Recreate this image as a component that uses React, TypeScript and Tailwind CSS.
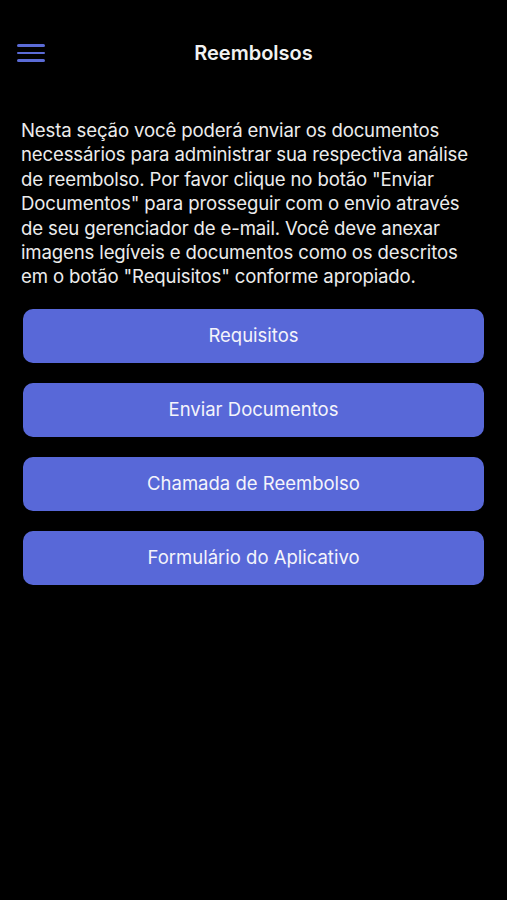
export default function App() {
  const buttons = ["Requisitos", "Enviar Documentos", "Chamada de Reembolso", "Formulário do Aplicativo"]

  return (
    <div className="min-h-[900px] w-full bg-black text-white" style={{ fontFamily: "Inter, 'Noto Sans', sans-serif" }}>
      {/* Header */}
      <header className="relative flex h-[104px] items-start justify-center pt-[39px]">
        <button className="absolute left-[17px] top-[44px] flex flex-col gap-[5px]">
          <span className="block h-[2.5px] w-[28px] rounded bg-[#5b6bd6]"></span>
          <span className="block h-[2.5px] w-[28px] rounded bg-[#5b6bd6]"></span>
          <span className="block h-[2.5px] w-[28px] rounded bg-[#5b6bd6]"></span>
        </button>
        <h1 className="text-[20px] font-semibold leading-[28px] text-[#f2f2f2]">Reembolsos</h1>
      </header>

      {/* Description */}
      <p className="mt-[14px] px-[21px] text-[18.6px] leading-[24.4px] tracking-[-0.15px] text-[#ececec]">
        Nesta seção você poderá enviar os documentos necessários para administrar sua respectiva análise de reembolso. Por favor clique no botão "Enviar Documentos" para prosseguir com o envio através de seu gerenciador de e-mail. Você deve anexar imagens legíveis e documentos como os descritos em o botão "Requisitos" conforme apropiado.
      </p>

      {/* Actions */}
      <div className="mt-[20px] flex flex-col gap-[20px] px-[23px]">
        {buttons.map((label) => (
          <button
            key={label}
            className="flex h-[54px] w-full items-center justify-center rounded-[10px] bg-[#5868d8] text-[18.5px] text-[#f4f4fb]"
          >
            {label}
          </button>
        ))}
      </div>
    </div>
  )
}
